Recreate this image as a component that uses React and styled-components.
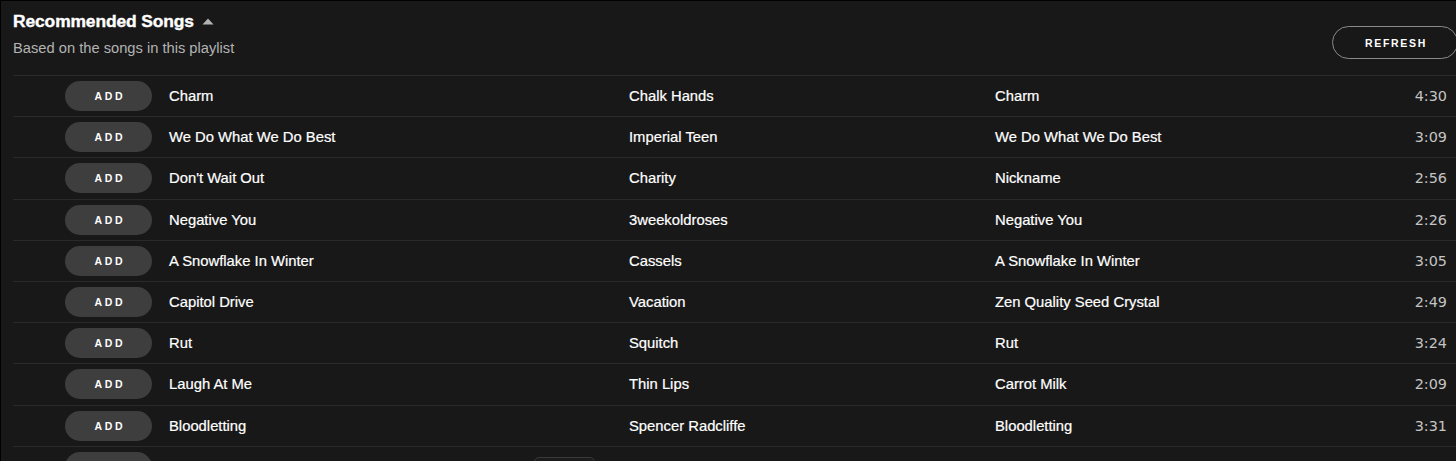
import React from 'react'
import styled, { createGlobalStyle } from 'styled-components'

const GlobalStyle = createGlobalStyle`
html, body {
    margin: 0;
    padding: 0;
    background: #181818;
    overflow: hidden;
}
body {
    font-family: "Liberation Sans", Arial, sans-serif;
    color: #fff;
}
`

const Section = styled.section`
width: 1456px;
height: 461px;
box-sizing: border-box;
border-top: 1px solid #000;
border-left: 1px solid #000;
background: #181818;
padding-left: 12px;
overflow: hidden;
position: relative;
`

const Header = styled.header`
display: flex;
justify-content: space-between;
align-items: flex-start;
padding-top: 10px;
`

const TitleRow = styled.div`
display: flex;
align-items: center;
gap: 8px;

h2 {
    margin: 0;
    font-size: 17.4px;
    line-height: 20px;
    font-weight: 700;
    letter-spacing: -0.1px;
    -webkit-text-stroke: 0.4px #fff;
}
`

const Subtitle = styled.div`
margin-top: 8px;
font-size: 14.7px;
line-height: 18px;
color: #b3b3b3;
`

const RefreshButton = styled.button`
margin-top: 15px;
margin-right: -2px;
height: 33px;
padding: 0 30px 0 32px;
background: transparent;
border: 1px solid #8a8a8a;
border-radius: 17px;
color: #fff;
font-family: "Liberation Sans", Arial, sans-serif;
font-size: 10.5px;
font-weight: 700;
letter-spacing: 1.7px;
`

const List = styled.div`
margin-top: 16px;
`

const Row = styled.div`
position: relative;
display: grid;
grid-template-columns: 104px 460px 366px 1fr auto;
align-items: center;
box-sizing: border-box;
height: 41.2px;
border-top: 1px solid #2a2a2a;
padding-left: 52px;
padding-right: 9px;
font-size: 14.8px;
`

const AddButton = styled.button`
width: 87px;
height: 30px;
padding: 0 0 0 2.6px;
border: none;
border-radius: 15px;
background: #3e3e3e;
color: #fff;
font-family: "Liberation Sans", Arial, sans-serif;
font-size: 10.5px;
font-weight: 700;
letter-spacing: 2.6px;
`

const Cell = styled.div`
white-space: nowrap;
color: #fff;
-webkit-text-stroke: 0.2px #fff;
`

const Duration = styled.div`
font-family: "DejaVu Sans", Verdana, sans-serif;
font-size: 14.4px;
color: #c4c4c4;
text-align: right;
`

const Peek = styled.div`
position: absolute;
left: 521px;
top: 10px;
width: 59px;
height: 20px;
border: 1px solid #3a3a3a;
border-radius: 5px;
background: #1c1c1c;
`

const songs = [
    ['Charm', 'Chalk Hands', 'Charm', '4:30'],
    ['We Do What We Do Best', 'Imperial Teen', 'We Do What We Do Best', '3:09'],
    ["Don't Wait Out", 'Charity', 'Nickname', '2:56'],
    ['Negative You', '3weekoldroses', 'Negative You', '2:26'],
    ['A Snowflake In Winter', 'Cassels', 'A Snowflake In Winter', '3:05'],
    ['Capitol Drive', 'Vacation', 'Zen Quality Seed Crystal', '2:49'],
    ['Rut', 'Squitch', 'Rut', '3:24'],
    ['Laugh At Me', 'Thin Lips', 'Carrot Milk', '2:09'],
    ['Bloodletting', 'Spencer Radcliffe', 'Bloodletting', '3:31'],
]

function Caret() {
    return (
        <svg width="12" height="7" viewBox="0 0 12 7">
            <path d="M6 0.5 L11.5 6.5 L0.5 6.5 Z" fill="#b3b3b3" />
        </svg>
    )
}

export default function App() {
    return (
        <>
            <GlobalStyle />
            <Section>
                <Header>
                    <div>
                        <TitleRow>
                            <h2>Recommended Songs</h2>
                            <Caret />
                        </TitleRow>
                        <Subtitle>Based on the songs in this playlist</Subtitle>
                    </div>
                    <RefreshButton>REFRESH</RefreshButton>
                </Header>
                <List>
                    {songs.map(([title, artist, album, time]) => (
                        <Row key={title}>
                            <AddButton>ADD</AddButton>
                            <Cell>{title}</Cell>
                            <Cell>{artist}</Cell>
                            <Cell>{album}</Cell>
                            <Duration>{time}</Duration>
                        </Row>
                    ))}
                    {/* next row, cut off by the bottom edge */}
                    <Row>
                        <AddButton aria-label="Add" />
                        <Cell />
                        <Cell />
                        <Cell />
                        <Duration />
                        <Peek />
                    </Row>
                </List>
            </Section>
        </>
    )
}
